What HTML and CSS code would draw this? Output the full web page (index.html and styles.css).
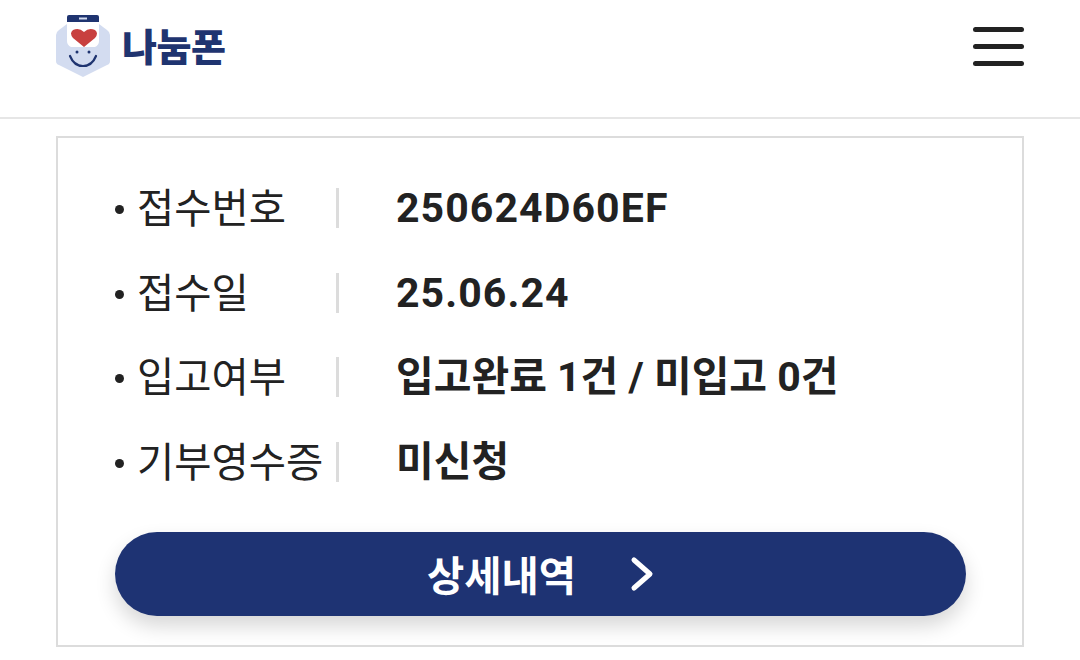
FILE: index.html
```html
<!DOCTYPE html>
<html lang="ko">
<head>
<meta charset="utf-8">
<title>나눔폰</title>
<link rel="stylesheet" href="styles.css">
</head>
<body>
<header class="header">
  <a class="logo">
    <svg class="logo-mark" width="54" height="64" viewBox="0 0 54 64">
      <path d="M0 21 Q0 18 3 16 L11 10 H43 L51 16 Q54 18 54 21 V47 Q54 50 51 51 L27 63 L3 51 Q0 50 0 47Z" fill="#d3dcf0"/>
      <path d="M11 7 H43 V27 Q43 31 39 33 H15 Q11 31 11 27Z" fill="#fff"/>
      <path d="M11 8 V3 Q11 1 13 1 H41 Q43 1 43 3 V8Z" fill="#1f3470"/>
      <rect x="23" y="3.5" width="8" height="2" fill="#d3dcf0"/>
      <path d="M28 33 L17 24 Q13 19 17 16 Q23 13 28 18 Q33 13 39 16 Q43 19 39 24Z" fill="#c8403f"/>
      <circle cx="21" cy="38" r="1.5" fill="#1f3470"/>
      <circle cx="33" cy="38" r="1.5" fill="#1f3470"/>
      <path d="M14 42 Q18 52 27 52 Q36 52 40 42" fill="none" stroke="#1f3470" stroke-width="2.2" stroke-linecap="round"/>
    </svg>
    <span class="logo-text">나눔폰</span>
  </a>
  <button class="menu" aria-label="메뉴"><span></span><span></span><span></span></button>
</header>
<main class="card">
  <dl class="rows">
    <div class="row"><dt class="label">접수번호</dt><dd class="value num">250624D60EF</dd></div>
    <div class="row"><dt class="label">접수일</dt><dd class="value num">25.06.24</dd></div>
    <div class="row"><dt class="label">입고여부</dt><dd class="value">입고완료 1건 / 미입고 0건</dd></div>
    <div class="row"><dt class="label">기부영수증</dt><dd class="value">미신청</dd></div>
  </dl>
  <a class="detail">
    <span>상세내역</span>
    <svg width="24" height="36" viewBox="0 0 24 36"><path d="M4 4 L20 18 L4 32" fill="none" stroke="#fff" stroke-width="5" stroke-linecap="round" stroke-linejoin="round"/></svg>
  </a>
</main>
</body>
</html>
```
FILE: styles.css
```css
* { box-sizing: border-box; margin: 0; padding: 0; }
html, body { width: 1080px; height: 660px; overflow: hidden; background: #fff; }
body { font-family: "Noto Sans CJK KR", "Roboto", sans-serif; color: #222; }
.header {
  height: 119px;
  border-bottom: 2px solid #e6e6e6;
  padding: 14px 56px 0;
  display: flex;
  justify-content: space-between;
  align-items: flex-start;
}
.logo { display: flex; align-items: center; gap: 12px; height: 64px; }
.logo-mark { display: block; }
.logo-text {
  font-size: 38px;
  font-weight: 900;
  color: #1f3470;
  letter-spacing: -0.5px;
  line-height: 1;
  margin-top: -3px;
}
.menu {
  width: 51px;
  margin-top: 13px;
  background: none;
  border: 0;
  display: flex;
  flex-direction: column;
  gap: 12px;
}
.menu span { display: block; height: 5px; border-radius: 3px; background: #222; }
.card {
  width: 968px;
  height: 511px;
  margin: 17px 56px 0;
  border: 2px solid #dcdcdc;
  padding: 28px 56px 0 57px;
}
.row {
  display: flex;
  align-items: center;
  height: 84.5px;
}
.label {
  width: 224px;
  height: 40px;
  display: flex;
  align-items: center;
  font-size: 40.5px;
  line-height: 36px;
  padding-bottom: 4px;
  font-weight: 400;
  color: #222;
  border-right: 3px solid #dcdcdc;
  white-space: nowrap;
  padding-left: 22px;
  position: relative;
}
.label::before {
  content: "";
  position: absolute;
  left: 0;
  top: 17px;
  width: 9px;
  height: 9px;
  border-radius: 50%;
  background: #222;
}
.value {
  margin-left: 57px;
  font-family: "Roboto", "Noto Sans CJK KR", sans-serif;
  font-size: 41px;
  font-weight: 700;
  line-height: 40px;
  color: #222;
  white-space: nowrap;
}
.num { letter-spacing: 1.1px; }
.detail {
  margin-top: 28px;
  height: 84px;
  border-radius: 42px;
  background: #1e3373;
  box-shadow: 0 10px 20px rgba(0, 0, 0, 0.16);
  display: flex;
  justify-content: center;
  align-items: center;
  gap: 54px;
  color: #fff;
  font-size: 40.5px;
  font-weight: 700;
  line-height: 1;
}
```
